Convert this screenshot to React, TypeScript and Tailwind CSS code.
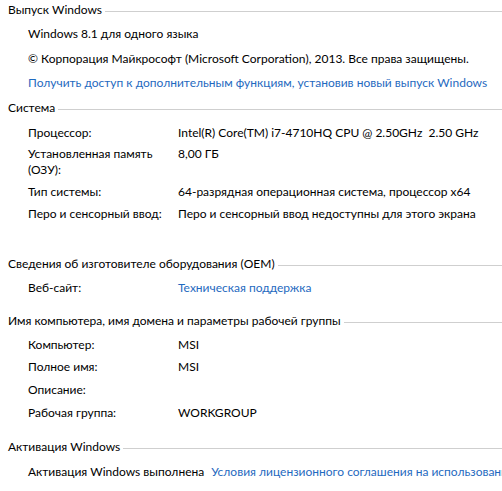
const LINK = "text-[#1f6ac0]";

function Heading({ title, className }: { title: string; className: string }) {
	return (
		<div className={`flex items-center pl-2 leading-4 ${className}`}>
			<span className="whitespace-nowrap">{title}</span>
			<div className="ml-[3px] mt-[2px] h-px flex-1 bg-[#cfcfcf]" />
		</div>
	);
}

function Row({
	label,
	value,
	link,
	className,
}: {
	label: string;
	value?: string;
	link?: boolean;
	className: string;
}) {
	return (
		<div className={`flex pl-7 leading-4 ${className}`}>
			<div className="w-[150px] shrink-0">{label}</div>
			<div className={`whitespace-pre ${link ? LINK : ""}`}>{value}</div>
		</div>
	);
}

export default function App() {
	return (
		<div
			className="h-[491px] w-[502px] overflow-hidden bg-white pt-[2px] text-[12px] text-black"
			style={{ fontFamily: 'Lato, "Noto Sans", sans-serif' }}
		>
			<Heading title="Выпуск Windows" className="" />
			<div className="mt-2 pl-7 leading-4 whitespace-nowrap">Windows 8.1 для одного языка</div>
			<div className="mt-[9px] pl-7 leading-4 whitespace-nowrap">
				© Корпорация Майкрософт (Microsoft Corporation), 2013. Все права защищены.
			</div>
			<div className={`mt-2 pl-7 leading-4 whitespace-nowrap ${LINK}`}>
				Получить доступ к дополнительным функциям, установив новый выпуск Windows
			</div>

			<Heading title="Система" className="mt-[9px]" />
			<Row
				label="Процессор:"
				value="Intel(R) Core(TM) i7-4710HQ CPU @ 2.50GHz  2.50 GHz"
				className="mt-[9px]"
			/>
			<Row label="Установленная память (ОЗУ):" value="8,00 ГБ" className="mt-[5px]" />
			<Row
				label="Тип системы:"
				value="64-разрядная операционная система, процессор x64"
				className="mt-[6px]"
			/>
			<Row
				label="Перо и сенсорный ввод:"
				value="Перо и сенсорный ввод недоступны для этого экрана"
				className="mt-[6px]"
			/>

			<Heading title="Сведения об изготовителе оборудования (OEM)" className="mt-[34px]" />
			<Row label="Веб-сайт:" value="Техническая поддержка" link className="mt-2" />

			<Heading
				title="Имя компьютера, имя домена и параметры рабочей группы"
				className="mt-[17px]"
			/>
			<Row label="Компьютер:" value="MSI" className="mt-2" />
			<Row label="Полное имя:" value="MSI" className="mt-[6px]" />
			<Row label="Описание:" className="mt-[7px]" />
			<Row label="Рабочая группа:" value="WORKGROUP" className="mt-[7px]" />

			<Heading title="Активация Windows" className="mt-[18px]" />
			<div className="mt-[9px] flex gap-[7px] pl-7 leading-4 whitespace-nowrap">
				<span>Активация Windows выполнена</span>
				<span className={LINK}>
					Условия лицензионного соглашения на использование программного обеспечения корпорации Майкрософт
				</span>
			</div>
		</div>
	);
}
